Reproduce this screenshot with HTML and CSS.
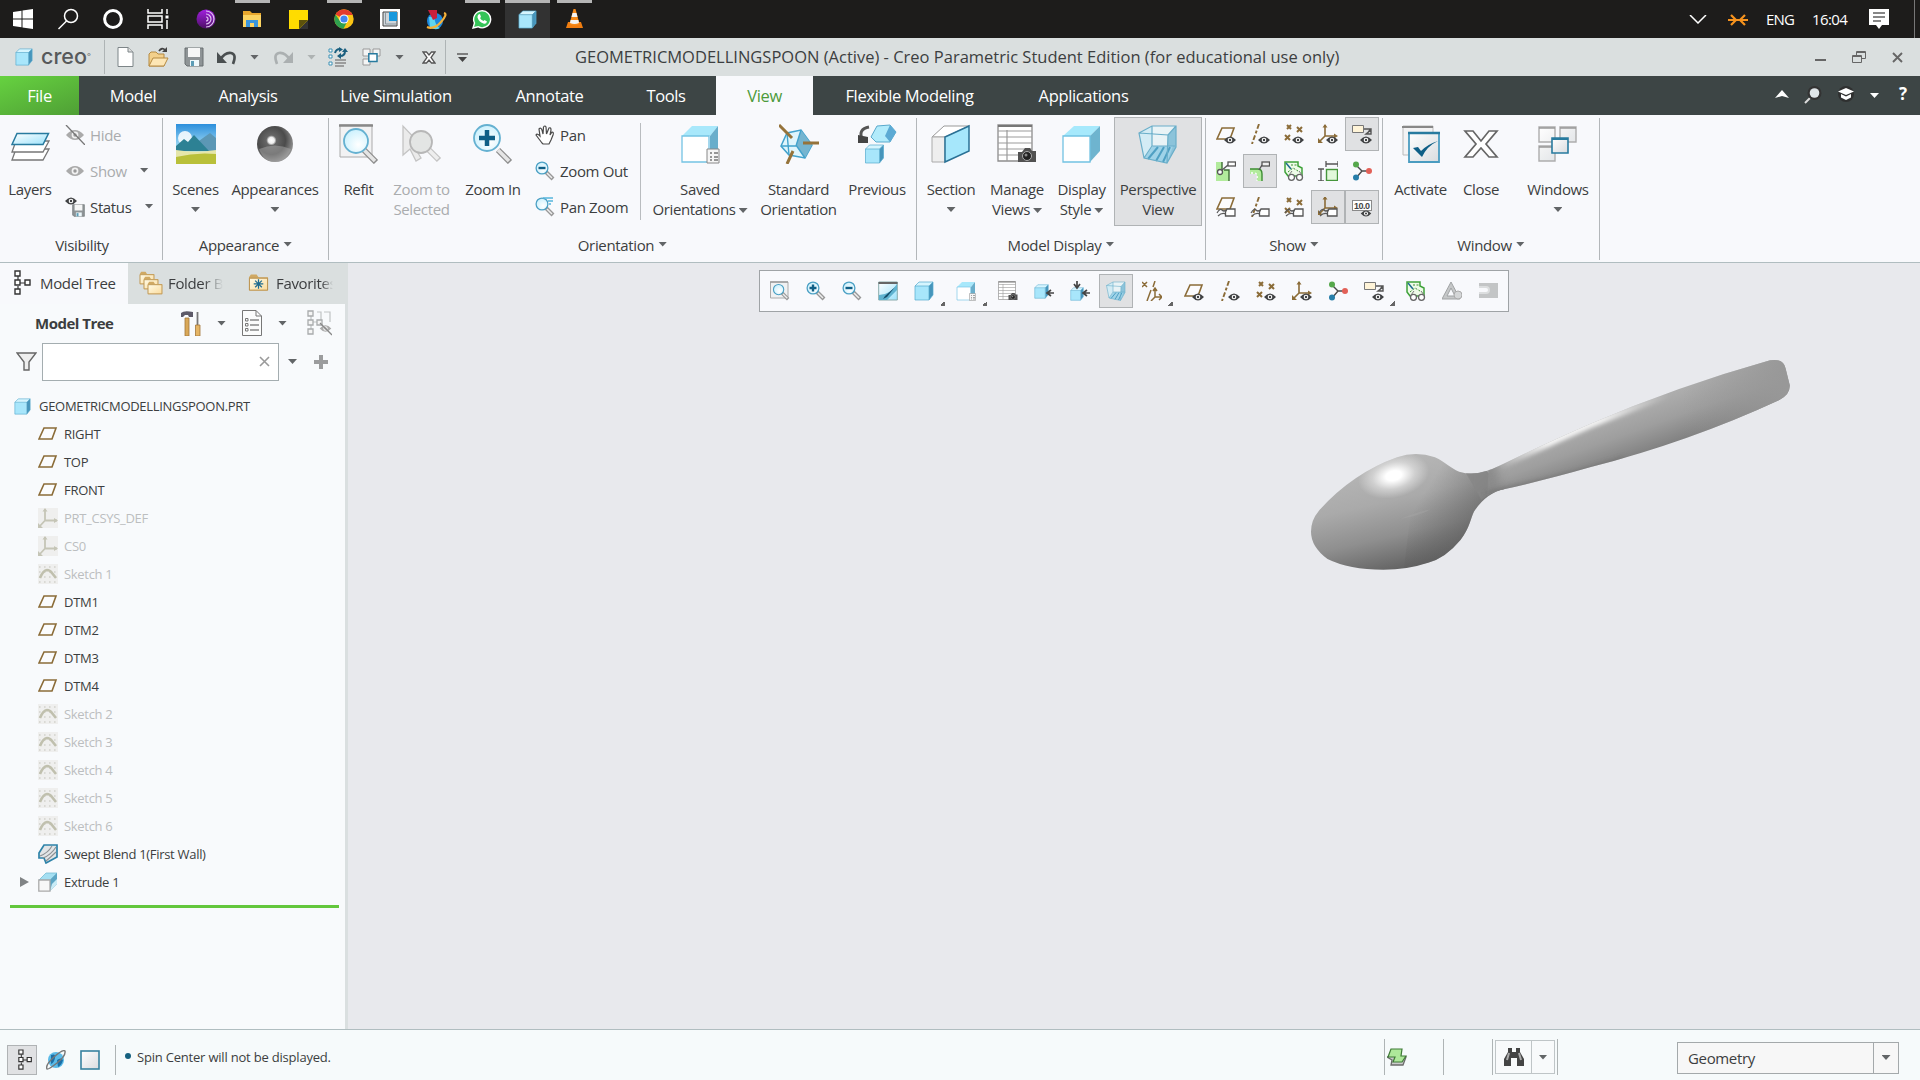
FILE: index.html
```html
<!DOCTYPE html>
<html lang="en">
<head>
<meta charset="utf-8">
<title>GEOMETRICMODELLINGSPOON - Creo Parametric</title>
<link rel="stylesheet" href="styles.css">
</head>
<body>
<svg class="defs" width="0" height="0" aria-hidden="true">
  <defs>
    <linearGradient id="g-sheet" x1="0" y1="0" x2="1" y2="1"><stop offset="0" stop-color="#fff"/><stop offset="1" stop-color="#d9dcdf"/></linearGradient>
    <linearGradient id="g-ice" x1="0" y1="0" x2="1" y2="1"><stop offset="0" stop-color="#fff"/><stop offset="1" stop-color="#9be2fb"/></linearGradient>
    <linearGradient id="g-sky" x1="0" y1="0" x2="0" y2="1"><stop offset="0" stop-color="#2c8fdc"/><stop offset=".6" stop-color="#a6def5"/></linearGradient>
    <radialGradient id="g-ball" cx=".4" cy=".4" r=".65"><stop offset="0" stop-color="#fff"/><stop offset=".13" stop-color="#eee"/><stop offset=".22" stop-color="#666"/><stop offset=".6" stop-color="#4b4b4b"/><stop offset="1" stop-color="#999"/></radialGradient>
    <radialGradient id="g-lens" cx=".6" cy=".65" r=".7"><stop offset="0" stop-color="#fff"/><stop offset="1" stop-color="#c9f0fd"/></radialGradient>
    <linearGradient id="g-folder" x1="0" y1="0" x2="1" y2="1"><stop offset="0" stop-color="#fffbe8"/><stop offset="1" stop-color="#fadb9c"/></linearGradient>
    <linearGradient id="g-tor" x1="0" y1="0" x2="0" y2="1"><stop offset="0" stop-color="#a21fe0"/><stop offset="1" stop-color="#4d0f66"/></linearGradient>
  </defs>

  <symbol id="plane" viewBox="0 0 20 20"><path d="M6 4H18L14 15H1Z" fill="#fff" fill-opacity=".4" stroke="#8b6c38" stroke-width="1.600"/></symbol>
  <symbol id="eye" viewBox="0 0 12 8"><path d="M0 4Q6-3 12 4Q6 11 0 4Z" fill="#404244"/><circle cx="6" cy="4" r="2.300" fill="#fff"/><circle cx="6" cy="4" r="1.200" fill="#404244"/></symbol>
  <symbol id="tag" viewBox="0 0 20 10"><path d="M1 6Q4 1 6 3T10 3M2 9Q6 5 10 7" fill="none" stroke="#5a5a5a" stroke-width="1.200"/><path d="M11 2H19V9H9.500V5Z" fill="#fff" stroke="#555" stroke-width="1.300"/></symbol>
  <symbol id="axisline" viewBox="0 0 20 20"><path d="M9 0L2 20" stroke="#8b6c38" stroke-width="1.900" stroke-dasharray="5 2 3 2"/></symbol>
  <symbol id="points" viewBox="0 0 20 20"><path d="M3 1L7 5M7 1L3 5M13 3L18 8M18 3L13 8M1 11L6 16M6 11L1 16" stroke="#8b6c38" stroke-width="2"/></symbol>
  <symbol id="csys" viewBox="0 0 20 20"><path d="M7 1V12H18M7 12L1 18" fill="none" stroke="#8b6c38" stroke-width="1.600"/><path d="M4.500 3.500L7 0L9.500 3.500ZM16 9.500L20 12L16 14.500ZM0 14V19H5Z" fill="#8b6c38"/></symbol>

  <symbol id="plane-eye" viewBox="0 0 20 20"><use href="#plane" width="20" height="20"/><use href="#eye" x="8" y="12" width="12" height="8"/></symbol>
  <symbol id="axis-eye" viewBox="0 0 20 20"><use href="#axisline" width="20" height="20"/><use href="#eye" x="8" y="12" width="12" height="8"/></symbol>
  <symbol id="points-eye" viewBox="0 0 20 20"><use href="#points" width="20" height="20"/><use href="#eye" x="8" y="12" width="12" height="8"/></symbol>
  <symbol id="csys-eye" viewBox="0 0 20 20"><use href="#csys" width="20" height="20"/><use href="#eye" x="8" y="12" width="12" height="8"/></symbol>
  <symbol id="plane-tag" viewBox="0 0 20 20"><use href="#plane" y="-3" width="20" height="20"/><use href="#tag" y="10" width="20" height="10"/></symbol>
  <symbol id="axis-tag" viewBox="0 0 20 20"><use href="#axisline" width="20" height="20"/><use href="#tag" y="10" width="20" height="10"/></symbol>
  <symbol id="points-tag" viewBox="0 0 20 20"><use href="#points" width="20" height="20"/><use href="#tag" y="10" width="20" height="10"/></symbol>
  <symbol id="csys-tag" viewBox="0 0 20 20"><use href="#csys" y="-1" width="20" height="20"/><use href="#tag" y="10" width="20" height="10"/></symbol>
  <symbol id="note-eye" viewBox="0 0 20 20"><path d="M.5 1.500H11.500V8.500H.5Z" fill="#fff4d8" stroke="#777"/><path d="M12 5H18.500L15 10M19 6V10H14Z" fill="none" stroke="#555" stroke-width="1.400"/><use href="#eye" x="8" y="12" width="12" height="8"/></symbol>
  <symbol id="surf-a" viewBox="0 0 20 20"><path d="M0 1H6V9H13V20H0Z" fill="#b2eb9c"/><path d="M6 1V8M8 9H13V20" fill="none" stroke="#3e6d34" stroke-width="1.400"/><path d="M5 10L12 4" stroke="#555" stroke-width="1.400"/><circle cx="4" cy="11" r="2.500" fill="#fff" stroke="#555" stroke-width="1.300"/><rect x="12" y="1" width="7.500" height="4" fill="#fff" stroke="#555" stroke-width="1.300"/></symbol>
  <symbol id="surf-b" viewBox="0 0 20 20"><path d="M0 8H8Q12 8 12 13V20H7V13H0Z" fill="#b2eb9c"/><path d="M0 8H8Q12 8 12 13V20" fill="none" stroke="#3c8d32" stroke-width="1.400"/><path d="M1 12H5Q8 13 7 20" fill="none" stroke="#fff" stroke-width="1.300" stroke-dasharray="2 2"/><path d="M9 9L12 4" stroke="#555" stroke-width="1.400"/><rect x="12" y="1" width="7.500" height="4" fill="#eee" stroke="#555" stroke-width="1.300"/></symbol>
  <symbol id="glasses" viewBox="0 0 20 20"><path d="M1 1H14V5L18 7V15H4L1 11Z" fill="#eefbe8" stroke="#3fa23a" stroke-width="1.500"/><path d="M2 2L7 8" stroke="#1d6b8e" stroke-width="1.500"/><path d="M7 4H13M4 11L9 7L14 10" fill="none" stroke="#3c8d32" stroke-dasharray="2 1.500"/><circle cx="7.500" cy="16.300" r="3" fill="#fff" stroke="#666" stroke-width="1.300"/><circle cx="15.500" cy="16.300" r="3" fill="#fff" stroke="#666" stroke-width="1.300"/><path d="M5 14L8 10M18 14L15 10" stroke="#777"/></symbol>
  <symbol id="dims" viewBox="0 0 20 20"><rect x="8.500" y="8.500" width="11" height="11" fill="#e2f8da" stroke="#46963b" stroke-width="1.400"/><path d="M8 3H20M8 0V6M20 0V6M3 8V20M0 8H6M0 20H6" stroke="#555" stroke-width="1.300"/></symbol>
  <symbol id="spin" viewBox="0 0 20 20"><path d="M4 4L10 10L18 10M10 10L4 17" fill="none" stroke="#4a4a4a" stroke-width="1.400"/><circle cx="4" cy="3.500" r="3" fill="#56a84c"/><circle cx="17" cy="10" r="3" fill="#e26057"/><circle cx="4" cy="16.500" r="3" fill="#277ea9"/></symbol>
  <symbol id="cube" viewBox="0 0 20 20"><path d="M1 5L5 1H19L15 5Z" fill="#d6f5fe"/><path d="M15 5L19 1V14L15 19Z" fill="#4795bb"/><path d="M1 5H15V19H1Z" fill="#a8e6fb"/><path d="M1 5L5 1H19V14L15 19H1ZM1 5H15V19M15 5L19 1" fill="none" stroke="#54a9cd" stroke-width=".7"/></symbol>
  <symbol id="mag" viewBox="0 0 20 20"><path d="M11 11L18 18" stroke="#989898" stroke-width="4"/><path d="M12 12L17 17" stroke="#eee" stroke-width="1.500"/><circle cx="7" cy="7" r="5.900" fill="url(#g-lens)" stroke="#4ba0c4" stroke-width="1.300"/></symbol>
  <symbol id="zoom-in" viewBox="0 0 20 20"><use href="#mag" width="20" height="20"/><path d="M7 3.500V10.500M3.500 7H10.500" stroke="#0f5f86" stroke-width="2.400"/></symbol>
  <symbol id="zoom-out" viewBox="0 0 20 20"><use href="#mag" width="20" height="20"/><path d="M3.500 7H10.500" stroke="#0f5f86" stroke-width="2.400"/></symbol>
  <symbol id="pan-zoom" viewBox="0 0 20 20"><use href="#mag" width="20" height="20"/><path d="M8 1H18M13 4H18M14 7H16" stroke="#55b5dc" stroke-width="1.300"/></symbol>
  <symbol id="refit" viewBox="0 0 20 20"><path d="M.5 1H18V17H.5Z" fill="#f0f1f2" stroke="#aaa"/><path d="M0 1H18" stroke="#999" stroke-width="1.400"/><g transform="translate(2.500 2.500) scale(.87)"><use href="#mag" width="20" height="20"/></g></symbol>
  <symbol id="camera" viewBox="0 0 20 16"><path d="M1 5H5L8 1H13L15 4H19V15H1Z" fill="#515151"/><circle cx="10" cy="9" r="4.500" fill="#222" stroke="#aaa"/><circle cx="9" cy="8" r="1.500" fill="#888"/></symbol>
  <symbol id="table-cam" viewBox="0 0 40 40"><path d="M1 1H35V37H1Z" fill="#fff" stroke="#8d8d8d" stroke-width="1.300"/><path d="M1 2H35" stroke="#777" stroke-width="2"/><path d="M10 6V37M1 7H35M1 13H35M1 19H35M1 25H35M1 31H35" stroke="#9b9b9b" stroke-width="1.200"/><use href="#camera" x="20" y="22" width="20" height="18"/></symbol>
  <symbol id="persp" viewBox="0 0 40 40"><path d="M1 9L14 2H38V23L29 39L6 34Z" fill="#d3ecf5"/><path d="M14 2H38V22H14Z" fill="#e9f3f6"/><path d="M30 11L38 2V23L29 39Z" fill="#8cc3da"/><path d="M6 34L15 22H35L29 39Z" fill="#9fd3e8"/><path d="M10 35L20 23M18 37L26 23M25 38L32 23" stroke="#4fa0c3" stroke-width="2"/><path d="M1 9L14 2H38V23L29 39L6 34ZM1 9L30 11L29 39M30 11L38 2M14 2V22H37M14 22L6 34" fill="none" stroke="#6aaec9" stroke-width="1.200"/></symbol>
  <symbol id="saved" viewBox="0 0 40 40"><path d="M2 12L12 2H38L30 12Z" fill="#a8e8fb"/><path d="M30 12L38 2V30L30 37Z" fill="#69aecb"/><path d="M2 12H29V38H2Z" fill="#fff" stroke="#74c3e4" stroke-width="1.300"/><path d="M27 25H39V39H27Z" fill="#f5f5f5" stroke="#888"/><path d="M30 29H32M34 29H38M30 33H32M34 33H38M30 36H32M34 36H38" stroke="#777" stroke-width="1.300"/></symbol>
  <symbol id="dispstyle" viewBox="0 0 40 40"><path d="M1 12L12 2H38L28 12Z" fill="#a6e9fc"/><path d="M28 12L38 2V27L28 38Z" fill="#6eb4cf"/><path d="M1 12H28V38H1Z" fill="#fff" stroke="#72c2e2" stroke-width="1.300"/></symbol>
  <symbol id="wins" viewBox="0 0 40 40"><path d="M1 3H17V18H1ZM22 3H38V18H22ZM1 22H17V37H1Z" fill="url(#g-sheet)" stroke="#adadad" stroke-width="1.400"/><path d="M1 4H17M22 4H38M1 23H17" stroke="#999" stroke-width="1.600"/><path d="M14 14H30V29H14Z" fill="url(#g-sheet)" stroke="#287b9f" stroke-width="1.600"/><path d="M14 15H30" stroke="#287b9f" stroke-width="2"/></symbol>
  <symbol id="tree" viewBox="0 0 18 26"><path d="M4 6V10M4 16V20M6 13H11" stroke="#333" stroke-width="1.200"/><path d="M1 1H6V6H1ZM1 10H6V15H1ZM1 19H6V24H1ZM11 10H16V15H11Z" fill="#fff" stroke="#333" stroke-width="1.400"/></symbol>
  <symbol id="folder" viewBox="0 0 22 19"><path d="M1 4L3 1H9L11 4H21V18H1Z" fill="#d0a963"/><path d="M1.500 5H20.500V17.500H1.500Z" fill="url(#g-folder)" stroke="#b98f4b"/></symbol>
  <symbol id="sketch" viewBox="0 0 20 20"><rect width="20" height="20" fill="#efefee"/><path d="M1 3H20M1 8H20M1 13H20M1 18H20" stroke="#d2d2cc" stroke-width="1.600" stroke-dasharray="1.600 3.400"/><path d="M2 14Q5 6.500 9 6Q12 6 14 9L18 14" fill="none" stroke="#c0c0ae" stroke-width="2.600"/></symbol>
  <symbol id="csys-off" viewBox="0 0 20 20"><rect width="20" height="20" fill="#efefee"/><path d="M7 1V12.500H19M7 12.500L1 19" fill="none" stroke="#c5c5b6" stroke-width="1.800"/><path d="M4.500 3.500H9.500L7 0ZM16 10V15L20 12.500ZM0 15V20H5Z" fill="#c5c5b6"/></symbol>
  <symbol id="eye-g" viewBox="0 0 20 14"><path d="M1 7Q10-3 19 7Q10 17 1 7Z" fill="#aaa"/><circle cx="10" cy="7" r="3.400" fill="#f1f1f1"/><circle cx="10" cy="7" r="1.700" fill="#999"/></symbol>
  <symbol id="floppy" viewBox="0 0 20 20"><path d="M1 1H19V19H3L1 17Z" fill="#8e9496" stroke="#696f71"/><path d="M4 1H16V10H4Z" fill="#f5f6f6"/><path d="M6 13H15V19H6Z" fill="#eef8fb"/><path d="M7 14H10V19H7Z" fill="#5c9db6"/></symbol>
</svg>

<header class="taskbar">
  <div class="sys">
    <span><svg width="20" height="20" viewBox="0 0 20 20" fill="#fff"><path d="M0 3L8.500 1.800V9.500H0ZM9.500 1.600L20 0V9.500H9.500ZM0 10.500H8.500V18.200L0 17ZM9.500 10.500H20V20L9.500 18.400Z"/></svg></span>
    <span><svg width="22" height="22" viewBox="0 0 22 22" fill="none" stroke="#fff" stroke-width="1.500"><circle cx="14" cy="8" r="6.500"/><path d="M9.500 13L1.500 21"/></svg></span>
    <span><svg width="20" height="20" viewBox="0 0 20 20" fill="none" stroke="#fff" stroke-width="3"><circle cx="10" cy="10" r="8.400"/></svg></span>
    <span><svg width="22" height="20" viewBox="0 0 22 20" fill="none" stroke="#fff" stroke-width="1.500"><path d="M1 0V4H15V0M1 20V16H15V20M1 7H15V13H1ZM20 0V5M20 11V20"/><path d="M18.500 8H21.500" stroke-width="3"/></svg></span>
  </div>
  <nav class="apps">
    <span><svg width="20" height="20" viewBox="0 0 20 20"><circle cx="10" cy="10" r="9.500" fill="url(#g-tor)"/><path d="M10 2A8 8 0 0 1 10 18M10 5A5 5 0 0 1 10 15M10 8A2 2 0 0 1 10 12" fill="none" stroke="#e0c5f2" stroke-width="1.200"/></svg></span>
    <span class="run"><svg width="20" height="18" viewBox="0 0 20 18"><path d="M1 1H8L10 3H19V17H1Z" fill="#e8a72d"/><path d="M1 5H19V17H1Z" fill="#fcd462"/><path d="M4 10H16V17H12V13H8V17H4Z" fill="#3a95dc"/></svg></span>
    <span><svg width="19" height="19" viewBox="0 0 19 19"><path d="M0 0H19V11L11 19H0Z" fill="#ffdc00"/><path d="M19 10V19H10Z" fill="#333"/><path d="M10 10H19L10 19Z" fill="#5d520b"/></svg></span>
    <span class="run"><svg width="20" height="20" viewBox="0 0 20 20"><circle cx="10" cy="10" r="9.700" fill="#fbc414"/><path d="M10 10L1.500 5.500A9.700 9.700 0 0 1 18.800 6H10Z" fill="#e33b2e"/><path d="M1.500 5.500A9.700 9.700 0 0 0 9.500 19.700L13.500 12L6 12Z" fill="#2fa14f"/><circle cx="10" cy="10" r="4.600" fill="#fff"/><circle cx="10" cy="10" r="3.600" fill="#4285f0"/></svg></span>
    <span><svg width="20" height="20" viewBox="0 0 20 20"><path d="M0 0H20V20H0Z" fill="#fff"/><path d="M3 3H17V17H3Z" fill="#d0d6da" stroke="#444"/><path d="M9 3H17V12H9Z" fill="#1898dd"/><path d="M5.500 4V15H16" fill="none" stroke="#8b969e" stroke-width="1"/></svg></span>
    <span><svg width="21" height="21" viewBox="0 0 21 21"><circle cx="9" cy="12" r="8" fill="#1b88df"/><path d="M3 8Q8 7 9 12T14 19Q9 22 4 18Z" fill="#5fd5ef"/><path d="M1 18Q8 21 15 13T18 4" fill="none" stroke="#f5b13a" stroke-width="2.200"/><path d="M2 1L11 1V9L7 11Z" fill="#c91f3c"/></svg></span>
    <span class="run"><svg width="20" height="20" viewBox="0 0 20 20"><path d="M1 19L2.500 14A8.500 8.500 0 1 1 6 17.700Z" fill="#35c458" stroke="#fff" stroke-width="1.400"/><path d="M6.500 5.500L8 5L9 8L8 9Q9 11 11.500 12L12.500 11L15 12.500Q14.500 15 12 14.700Q7 13.500 5.500 8.500Q5.400 6.500 6.500 5.500Z" fill="#fff"/></svg></span>
    <span class="run current"><svg width="19" height="19"><use href="#cube"/></svg></span>
    <span class="run"><svg width="17" height="20" viewBox="0 0 17 20"><path d="M2 13H15L17 19H0Z" fill="#f07d10"/><path d="M7.500 0H9.500L13.500 15Q8.500 18 3.500 15Z" fill="#f58a1a"/><path d="M6.500 4H10.500L11.500 8H5.500ZM4.600 11H12.400L13 14Q8.500 16 4 14Z" fill="#f3f3f3"/></svg></span>
  </nav>
  <div class="tray">
    <svg class="t-chev" width="18" height="9" viewBox="0 0 18 9" fill="none" stroke="#fff" stroke-width="1.500"><path d="M1 0L9 8L17 0"/></svg>
    <svg class="t-mid" width="20" height="13" viewBox="0 0 20 13" fill="none" stroke="#f7931e" stroke-width="2.200"><path d="M0 7H20M3 2L8 7L3 12M17 2L12 7L17 12"/></svg>
    <span class="lang">ENG</span><span class="clock">16:04</span>
    <svg width="20" height="20" viewBox="0 0 20 20"><path d="M0 0H20V16H13L10 20L7 16H0Z" fill="#fff"/><path d="M4 4H16M4 8H16M4 12H12" stroke="#111" stroke-width="1.200"/></svg>
    <i class="peek"></i>
  </div>
</header>

<div class="titlebar">
  <div class="brand"><svg width="18" height="18"><use href="#cube"/></svg><b>creo</b><small>°</small></div>
  <div class="quick">
    <svg width="17" height="20" viewBox="0 0 17 20"><path d="M1 .5H11L16 5V19.500H1Z" fill="#fff" stroke="#7d8588"/><path d="M11 .5V5H16" fill="#ddd" stroke="#7d8588"/></svg>
    <svg width="21" height="20" viewBox="0 0 21 20"><path d="M1 7L3 5H8L10 7H16V19H1Z" fill="#f3d08b" stroke="#b58a42"/><path d="M5 11H20L16 19H1Z" fill="#fde6b5" stroke="#b58a42"/><path d="M11 4Q14 0 17 3" fill="none" stroke="#444" stroke-width="1.800"/><path d="M14 5H19V0Z" fill="#444"/></svg>
    <svg width="20" height="20"><use href="#floppy"/></svg>
    <svg width="20" height="15" viewBox="0 0 20 15"><path d="M3 10Q8 2 14 3T16 14" fill="none" stroke="#4a4f50" stroke-width="2.600"/><path d="M0 2V13H10Z" fill="#4a4f50"/></svg>
    <i class="arr"></i>
    <svg width="20" height="15" viewBox="0 0 20 15"><path d="M17 10Q12 2 6 3T4 14" fill="none" stroke="#abb0b1" stroke-width="2.600"/><path d="M20 2V13H10Z" fill="#abb0b1"/></svg>
    <i class="arr off"></i>
    <svg width="20" height="20" viewBox="0 0 20 20"><path d="M1 2H4V5H1ZM1 8H4V11H1ZM1 15H4V18H1Z" fill="#fff" stroke="#3c91b5"/><path d="M7 13H18M7 16H18M7 19H16" stroke="#888" stroke-width="1.300"/><path d="M7 6Q8 2 12 2M17 4Q17 9 12 9" fill="none" stroke="#1b5f7f" stroke-width="2"/><path d="M11 0L15 2.500L11 5ZM13 6L9 9L13 12ZM14 5H20L17 1Z" fill="#1b5f7f"/></svg>
    <svg width="20" height="20" viewBox="0 0 20 20"><path d="M1 2H8V9H1ZM11 2H18V9H11ZM1 12H8V18H1Z" fill="#f4f5f5" stroke="#999"/><path d="M6.800 6.800H15V14.500H6.800Z" fill="#fff" stroke="#287b9f" stroke-width="1.500"/></svg>
    <i class="arr"></i>
    <svg width="14" height="13" viewBox="0 0 14 13"><path d="M1 1H4.500L7 4L9.500 1H13L9 6.500L13 12H9.500L7 9L4.500 12H1L5 6.500Z" fill="#fff" stroke="#555" stroke-width="1.300"/></svg>
    <span class="custom"><svg width="11" height="9" viewBox="0 0 11 9"><path d="M0 1H11" stroke="#555" stroke-width="1.400"/><path d="M1 4H10L5.500 9Z" fill="#444"/></svg></span>
  </div>
  <h1>GEOMETRICMODELLINGSPOON (Active) - Creo Parametric Student Edition (for educational use only)</h1>
  <div class="winbtns">
    <svg width="11" height="13" viewBox="0 0 11 13"><path d="M0 9H11" stroke="#666" stroke-width="2"/></svg>
    <svg width="14" height="12" viewBox="0 0 14 12" fill="none" stroke="#666"><path d="M4.500 4V.5H13.500V7.500H10M4 1.500H13"/><path d="M.5 4.500H9.500V11.500H.5ZM0 5.500H10"/></svg>
    <svg width="11" height="11" viewBox="0 0 11 11" stroke="#666" stroke-width="1.900"><path d="M1 1L10 10M10 1L1 10"/></svg>
  </div>
</div>

<nav class="tabs">
  <a class="file">File</a><a>Model</a><a>Analysis</a><a>Live Simulation</a><a>Annotate</a><a>Tools</a><a class="on">View</a><a>Flexible Modeling</a><a>Applications</a>
  <div class="tabtools">
    <svg width="14" height="8" viewBox="0 0 14 8"><path d="M0 8L7 0L14 8L7 6Z" fill="#fff"/></svg>
    <svg width="18" height="19" viewBox="0 0 18 19"><path d="M1 18L6 13" stroke="#ddd" stroke-width="2"/><circle cx="10.500" cy="8" r="7" fill="#333"/><circle cx="10.500" cy="8" r="4.800" fill="#dfe5e8"/></svg>
    <svg width="18" height="16" viewBox="0 0 18 16"><circle cx="9" cy="8" r="8" fill="#2f3030"/><path d="M9 2L17 5.500L9 9L1 5.500Z" fill="#fff"/><path d="M4 8L9 10.500L14 8V11.500L9 14L4 11.500Z" fill="#fff"/></svg>
    <i class="arr white"></i>
    <b class="help">?</b>
  </div>
</nav>

<section class="ribbon">
  <div class="group g-vis">
    <div class="tools">
      <div class="big layers"><svg width="40" height="40" viewBox="0 0 40 40"><path d="M6 25H39L33 36H2Z" fill="#fff" stroke="#777" stroke-width="1.300"/><path d="M6 17H39L33 28H2Z" fill="#fff" stroke="#777" stroke-width="1.300"/><path d="M7 9.500H38.500L33 20.500H2Z" fill="url(#g-ice)" stroke="#287b9f" stroke-width="1.500"/></svg><p>Layers</p></div>
      <div class="smalls">
        <div class="off"><svg width="20" height="20" viewBox="0 0 20 20"><use href="#eye-g" y="3" width="20" height="14"/><path d="M1 0L20 20" stroke="#777" stroke-width="1.300"/></svg>Hide</div>
        <div class="off"><svg width="20" height="14"><use href="#eye-g"/></svg>Show<i class="arr far"></i></div>
        <div><svg width="20" height="20" viewBox="0 0 20 20"><use href="#floppy" x="7" y="7" width="13" height="13"/><use href="#eye" x="0" y="0" width="12" height="8"/></svg>Status<i class="arr far"></i></div>
      </div>
    </div>
    <h2>Visibility</h2>
  </div>

  <div class="group g-app">
    <div class="tools">
      <div class="big"><svg width="40" height="40" viewBox="0 0 40 40"><path d="M0 0H40V40H0Z" fill="url(#g-sky)"/><circle cx="9" cy="14" r="7" fill="#fff" opacity=".85"/><path d="M20 19L34 9L40 14V27H16Z" fill="#5c97b5"/><path d="M0 22L8 15L12 18L18 11L33 27H0Z" fill="#2d8194"/><path d="M0 26Q20 29 40 26V40H0Z" fill="#e5e6aa"/><path d="M0 33Q20 28 40 30V40H0Z" fill="#b9c03a"/></svg><p>Scenes<br><i class="arr"></i></p></div>
      <div class="big"><svg width="40" height="40" viewBox="0 0 40 40"><circle cx="20" cy="20" r="18" fill="url(#g-ball)"/><path d="M4 25Q20 18 36 25Q31 38 20 38T4 25Z" fill="#aaa" opacity=".5"/></svg><p>Appearances<br><i class="arr"></i></p></div>
    </div>
    <h2>Appearance<i class="arr"></i></h2>
  </div>

  <div class="group g-ori">
    <div class="tools">
      <div class="big"><svg width="40" height="40" viewBox="0 0 40 40"><path d="M1 1H33V33H1Z" fill="#f2f2f3" stroke="#aaa"/><path d="M0 1.500H34" stroke="#888" stroke-width="2.500"/><path d="M25 26L37 38" stroke="#8d8d8d" stroke-width="6"/><path d="M25 26L36 37" stroke="#e5e5e5" stroke-width="3.500"/><circle cx="17" cy="17" r="12" fill="url(#g-lens)" stroke="#65b1d1" stroke-width="1.800"/></svg><p>Refit</p></div>
      <div class="big off"><svg width="40" height="40" viewBox="0 0 40 40"><path d="M1 2V31L8 25L14 37L19 34L13 24H22Z" fill="#ebebeb" stroke="#c4c4c4" stroke-width="1.300"/><path d="M27 26L37 36" stroke="#c4c4c4" stroke-width="6"/><path d="M27 26L36 35" stroke="#eee" stroke-width="3.500"/><circle cx="19" cy="18" r="11" fill="#e3e5e4" stroke="#b7b7b7" stroke-width="1.800"/></svg><p>Zoom to<br>Selected</p></div>
      <div class="big"><svg width="40" height="40" viewBox="0 0 40 40"><path d="M25 26L37 38" stroke="#8d8d8d" stroke-width="6"/><path d="M25 26L36 37" stroke="#e5e5e5" stroke-width="3.500"/><circle cx="14" cy="14" r="13" fill="url(#g-lens)" stroke="#65b1d1" stroke-width="1.800"/><path d="M14 6V22M6 14H22" stroke="#0f5f86" stroke-width="4.500"/></svg><p>Zoom In</p></div>
      <div class="smalls">
        <div><svg width="20" height="20" viewBox="0 0 20 20"><path d="M7 18Q4 14 1 10Q2 8 5 11L4 4Q6 2 7 5L8 9L8.500 2Q10 0 11 2L11.500 9L14 3Q16 2 16 5L15 10L17 7Q19 7 18 10L16 15L14 19H8Z" fill="#fff" stroke="#4a4a4a" stroke-width="1.200"/></svg>Pan</div>
        <div><svg width="20" height="20"><use href="#zoom-out"/></svg>Zoom Out</div>
        <div><svg width="20" height="20"><use href="#pan-zoom"/></svg>Pan Zoom</div>
      </div>
      <i class="vsep"></i>
      <div class="big"><svg width="40" height="40"><use href="#saved"/></svg><p>Saved<br>Orientations<i class="arr in"></i></p></div>
      <div class="big"><svg width="40" height="40" viewBox="0 0 40 40"><path d="M2 22L8 9L22 6L33 21L26 34L10 31Z" fill="#dff5fc" stroke="#42a2cc" stroke-width="1.500"/><path d="M22 6L33 21L26 34L17 21Z" fill="#75b5d0"/><path d="M2 22H17L22 6M17 21L26 34M8 9L10 31" fill="none" stroke="#42a2cc" stroke-width="1.400"/><path d="M0 1L13 14M24 19H40M14 27L8 40" stroke="#95733a" stroke-width="3"/></svg><p>Standard<br>Orientation</p></div>
      <div class="big"><svg width="40" height="40" viewBox="0 0 40 40"><path d="M12 3Q1 5 5 15" fill="none" stroke="#555" stroke-width="3"/><path d="M1 11L1 19H11V13Z" fill="#444"/><path d="M14 13L20 2L33 1L39 8L33 18H19Z" fill="#b2ebfb" stroke="#5aa9cc"/><path d="M33 1L39 8L33 18L28 12Z" fill="#5caad4"/><use href="#cube" x="7" y="20" width="21" height="20"/></svg><p>Previous</p></div>
    </div>
    <h2>Orientation<i class="arr"></i></h2>
  </div>

  <div class="group g-disp">
    <div class="tools">
      <div class="big"><svg width="40" height="40" viewBox="0 0 40 40"><path d="M1 13L13 2H38L14 13Z" fill="#fff" stroke="#999"/><path d="M1 13H14V38H1Z" fill="#eee" stroke="#aaa"/><path d="M14 13L38 2V27L14 38Z" fill="#a6e7fb" stroke="#2a7195" stroke-width="1.500"/></svg><p>Section<br><i class="arr"></i></p></div>
      <div class="big"><svg width="40" height="40"><use href="#table-cam"/></svg><p>Manage<br>Views<i class="arr in"></i></p></div>
      <div class="big"><svg width="40" height="40"><use href="#dispstyle"/></svg><p>Display<br>Style<i class="arr in"></i></p></div>
      <div class="big pressed"><svg width="40" height="40"><use href="#persp"/></svg><p>Perspective<br>View</p></div>
    </div>
    <h2>Model Display<i class="arr"></i></h2>
  </div>

  <div class="group g-show">
    <div class="iconsgrid">
      <span><svg><use href="#plane-eye"/></svg></span><span><svg><use href="#axis-eye"/></svg></span><span><svg><use href="#points-eye"/></svg></span><span><svg><use href="#csys-eye"/></svg></span><span class="pressed"><svg><use href="#note-eye"/></svg></span>
      <span><svg><use href="#surf-a"/></svg></span><span class="pressed"><svg><use href="#surf-b"/></svg></span><span><svg><use href="#glasses"/></svg></span><span><svg><use href="#dims"/></svg></span><span><svg><use href="#spin"/></svg></span>
      <span><svg><use href="#plane-tag"/></svg></span><span><svg><use href="#axis-tag"/></svg></span><span><svg><use href="#points-tag"/></svg></span><span class="pressed"><svg><use href="#csys-tag"/></svg></span><span class="pressed"><svg viewBox="0 0 20 20"><rect x=".5" y="3.500" width="19" height="10" fill="#fff" stroke="#8a8a8a"/><text x="2" y="12" font-family="Liberation Sans, sans-serif" font-weight="700" font-size="9" letter-spacing="0" fill="#444" textLength="16">10.0</text><use href="#eye" x="8" y="13" width="12" height="7"/></svg></span>
    </div>
    <h2>Show<i class="arr"></i></h2>
  </div>

  <div class="group g-win">
    <div class="tools">
      <div class="big"><svg width="40" height="40" viewBox="0 0 40 40"><path d="M2 2H32V31H2Z" fill="#f3f3f4" stroke="#bbb"/><path d="M1 3H32" stroke="#888" stroke-width="2"/><path d="M8 9H38V38H8Z" fill="url(#g-sheet)" stroke="#4a9cc0" stroke-width="1.800"/><path d="M7 9H39" stroke="#287b9f" stroke-width="2.500"/><path d="M12 24L21 33Q26 22 37 17Q27 20 20 27L17 23Z" fill="#0f5f86"/></svg><p>Activate</p></div>
      <div class="big"><svg width="40" height="40" viewBox="0 0 40 40"><path d="M4 7H12L20 17L28 7H36L25 20L36 33H28L20 24L12 33H4L15 20Z" fill="#fff" stroke="#666" stroke-width="1.700"/></svg><p>Close</p></div>
      <i class="vsep"></i>
      <div class="big"><svg width="40" height="40"><use href="#wins"/></svg><p>Windows<br><i class="arr"></i></p></div>
    </div>
    <h2>Window<i class="arr"></i></h2>
  </div>
</section>

<main>
  <aside>
    <div class="sidetabs">
      <div class="on"><svg width="18" height="26"><use href="#tree"/></svg><span>Model Tree</span></div>
      <div class="t-folder"><svg width="24" height="24" viewBox="0 0 24 24"><use href="#folder" width="16" height="14"/><use href="#folder" x="4" y="5" width="16" height="14"/><use href="#folder" x="8" y="10" width="16" height="14"/></svg><span class="fade">Folder Br</span></div>
      <div class="t-fav"><svg width="21" height="19" viewBox="0 0 22 19"><use href="#folder" width="22" height="19"/><path d="M11 6V16M6 11H16M7.500 7.500L14.500 14.500M14.500 7.500L7.500 14.500" stroke="#1f6c90" stroke-width="1.300"/></svg><span class="fade">Favorites</span></div>
    </div>
    <div class="treehead">
      <b>Model Tree</b>
      <svg width="21" height="25" viewBox="0 0 21 25"><path d="M1 2Q4-1 13 1V6H9L8 4H5L3 6H1Z" fill="#5d5a68"/><path d="M5 7H9V25H5Z" fill="#d9a858" stroke="#a2763a" stroke-width=".8"/><path d="M17.500 1V14" stroke="#777" stroke-width="1.800"/><path d="M15.500 14H20V25H15.500Z" fill="#e5b565" stroke="#a2763a" stroke-width=".8"/></svg>
      <i class="arr"></i>
      <svg width="20" height="26" viewBox="0 0 20 26"><path d="M.5 .5H14L19.500 6V25.500H.5Z" fill="#fbfcfc" stroke="#777"/><path d="M14 .5V6H19.500" fill="none" stroke="#777"/><path d="M8 10H17M8 15H17M8 20H17" stroke="#888" stroke-width="1.400"/><path d="M3.500 8.500H6V11H3.500ZM3.500 13.500H6V16H3.500ZM3.500 18.500H6V21H3.500Z" fill="none" stroke="#777"/></svg>
      <i class="arr"></i>
      <svg width="25" height="26" viewBox="0 0 25 26"><path d="M4 6V20M6 12H10M10 2H14V12M17 2H23V12" fill="none" stroke="#c0c3c4" stroke-width="1.200"/><path d="M1 1H6V6H1ZM1 10H6V15H1ZM1 19H6V24H1ZM10 10H15V15H10Z" fill="#f5f5f5" stroke="#a8abac" stroke-width="1.300"/><use href="#eye-g" x="12" y="14" width="13" height="9"/><path d="M13 13L25 25" stroke="#888" stroke-width="1.300"/></svg>
    </div>
    <div class="filter">
      <svg width="21" height="19" viewBox="0 0 21 19"><path d="M1 1H20L13 10V18H8V10Z" fill="#eee" stroke="#666" stroke-width="1.400"/></svg>
      <div class="field"><svg width="11" height="11" viewBox="0 0 11 11" stroke="#9a9a9a" stroke-width="1.600"><path d="M1 1L10 10M10 1L1 10"/></svg></div>
      <i class="arr"></i>
      <svg width="14" height="14" viewBox="0 0 14 14" stroke="#9b9c9d" stroke-width="4"><path d="M7 0V14M0 7H14"/></svg>
    </div>
    <ul class="tree">
      <li class="root"><svg width="17" height="16"><use href="#cube"/></svg>GEOMETRICMODELLINGSPOON.PRT</li>
      <li><svg><use href="#plane"/></svg>RIGHT</li>
      <li><svg><use href="#plane"/></svg>TOP</li>
      <li><svg><use href="#plane"/></svg>FRONT</li>
      <li class="off"><svg><use href="#csys-off"/></svg>PRT_CSYS_DEF</li>
      <li class="off"><svg><use href="#csys-off"/></svg>CS0</li>
      <li class="off"><svg><use href="#sketch"/></svg>Sketch 1</li>
      <li><svg><use href="#plane"/></svg>DTM1</li>
      <li><svg><use href="#plane"/></svg>DTM2</li>
      <li><svg><use href="#plane"/></svg>DTM3</li>
      <li><svg><use href="#plane"/></svg>DTM4</li>
      <li class="off"><svg><use href="#sketch"/></svg>Sketch 2</li>
      <li class="off"><svg><use href="#sketch"/></svg>Sketch 3</li>
      <li class="off"><svg><use href="#sketch"/></svg>Sketch 4</li>
      <li class="off"><svg><use href="#sketch"/></svg>Sketch 5</li>
      <li class="off"><svg><use href="#sketch"/></svg>Sketch 6</li>
      <li><svg viewBox="0 0 20 20"><path d="M1 9L6 1H19V13L8 19L6 14L1 14Z" fill="#e2e5e7" stroke="#2e83a9" stroke-width="1.700"/><path d="M2 12Q10 9 14 2M5 14Q13 11 18 3M8 17Q14 12 18 8" fill="none" stroke="#8d9194" stroke-width="1.100"/></svg>Swept Blend 1(First Wall)</li>
      <li class="exp"><i></i><svg viewBox="0 0 20 20"><path d="M1 8L8 1H19L12 8Z" fill="#a4dff2" stroke="#76bcd6" stroke-width=".8"/><path d="M12 8L19 1V12L12 19Z" fill="#5da5c4"/><path d="M14 12L19 7V12L12 19Z" fill="#c9ebf6"/><path d="M.8 8H12V19.200H.8Z" fill="#f7f7f7" stroke="#aaa" stroke-width="1.300"/></svg>Extrude 1</li>
    </ul>
    <hr>
  </aside>

  <div class="canvas">
    <div class="gtools">
      <span><svg><use href="#refit"/></svg></span><span><svg><use href="#zoom-in"/></svg></span><span><svg><use href="#zoom-out"/></svg></span>
      <span><svg viewBox="0 0 20 20"><path d="M.7 1H19.300V19H.7Z" fill="url(#g-ice)" stroke="#8aa"/><path d="M.5 2H19.500" stroke="#666" stroke-width="2"/><path d="M1 19H9L19 9V3Q12 14 1 14Z" fill="#5fb3d0"/><path d="M17 6L7 15L5 18L9 16Z" fill="#154f6d"/></svg></span>
      <span class="more"><svg><use href="#cube"/></svg></span><span class="more"><svg><use href="#saved"/></svg></span><span><svg><use href="#table-cam"/></svg></span>
      <span><svg viewBox="0 0 20 20"><use href="#cube" y="3" width="15" height="15"/><path d="M20 12H14M17 9L13 12L17 15" fill="none" stroke="#444" stroke-width="1.700"/></svg></span>
      <span><svg viewBox="0 0 20 20"><use href="#cube" y="6" width="14" height="14"/><path d="M20 12H14M17 9L13 12L17 15M7 0V6M4 3L7 7L10 3" fill="none" stroke="#444" stroke-width="1.700"/></svg></span>
      <span class="pressed"><svg><use href="#persp"/></svg></span>
      <span class="more"><svg viewBox="0 0 20 20"><path d="M0 1L5 6M5 1L0 6M13 0L11 6M9 9L5 20M13 8V16H20M13 16L9 20M11 10L13 7L15 10M17 13L20 16L17 19" fill="none" stroke="#8b6c38" stroke-width="1.500"/></svg></span>
      <span><svg><use href="#plane-eye"/></svg></span><span><svg><use href="#axis-eye"/></svg></span><span><svg><use href="#points-eye"/></svg></span><span><svg><use href="#csys-eye"/></svg></span><span><svg><use href="#spin"/></svg></span><span class="more"><svg><use href="#note-eye"/></svg></span><span><svg><use href="#glasses"/></svg></span>
      <span><svg viewBox="0 0 20 20"><path d="M9 1L18 18H0ZM9 7L5 15H13Z" fill="#c5c7c8" fill-rule="evenodd" stroke="#a0a3a4"/><circle cx="16" cy="14" r="4" fill="#d4d6d7" stroke="#aaa"/></svg></span>
      <span><svg viewBox="0 0 20 20"><path d="M1 2H20V17H1V12H8Q11 12 11 9T8 6H1Z" fill="#c3c5c6"/><path d="M1 6H8Q11 6 11 9T8 12H1" fill="none" stroke="#dcdedf" stroke-width="2"/></svg></span>
    </div>
    <svg class="spoon" width="540" height="250" viewBox="0 0 1568 750" preserveAspectRatio="none">
      <defs>
        <linearGradient id="s-bowl" gradientUnits="userSpaceOnUse" x1="270" y1="350" x2="350" y2="690"><stop offset="0" stop-color="#b8b8b8"/><stop offset=".4" stop-color="#aaa"/><stop offset=".7" stop-color="#8f8f8f"/><stop offset="1" stop-color="#626262"/></linearGradient>
        <linearGradient id="s-dark" gradientUnits="userSpaceOnUse" x1="400" y1="490" x2="550" y2="580"><stop offset="0" stop-color="#5c5c5c" stop-opacity="0"/><stop offset="1" stop-color="#5c5c5c" stop-opacity=".6"/></linearGradient>
        <radialGradient id="s-shine" gradientUnits="userSpaceOnUse" cx="0" cy="0" r="1" gradientTransform="translate(330 407) rotate(-14) scale(105 66)"><stop offset="0" stop-color="#fff"/><stop offset=".22" stop-color="#fff"/><stop offset=".6" stop-color="#fff" stop-opacity=".4"/><stop offset="1" stop-color="#fff" stop-opacity="0"/></radialGradient>
        <linearGradient id="s-handle" gradientUnits="userSpaceOnUse" x1="1000" y1="210" x2="1048" y2="340"><stop offset="0" stop-color="#adadad"/><stop offset=".5" stop-color="#9e9e9e"/><stop offset="1" stop-color="#828282"/></linearGradient>
        <linearGradient id="s-tip" x1="0" y1="0" x2="1" y2="0"><stop offset="0" stop-color="#989898" stop-opacity="0"/><stop offset=".45" stop-color="#989898" stop-opacity="0"/><stop offset=".95" stop-color="#989898"/></linearGradient>
        <linearGradient id="s-edge" x1="0" y1="0" x2="1" y2="0"><stop offset="0" stop-color="#fff" stop-opacity="0"/><stop offset=".3" stop-color="#fff" stop-opacity=".95"/><stop offset=".6" stop-color="#fff" stop-opacity=".9"/><stop offset="1" stop-color="#fff" stop-opacity="0"/></linearGradient>
        <filter id="s-blur" x="-10%" y="-30%" width="120%" height="160%"><feGaussianBlur stdDeviation="7"/></filter>
        <filter id="s-soft" x="-30%" y="-30%" width="160%" height="160%"><feGaussianBlur stdDeviation="14"/></filter>
        <clipPath id="s-clip"><path d="M540 400Q585 405 640 376Q750 320 900 252Q1150 140 1423 61Q1462 54 1468 85L1480 135Q1482 163 1450 180Q1190 305 900 382Q790 415 650 448Q610 455 585 480Z"/></clipPath>
      </defs>
      <path d="M90 575Q90 540 113 512Q210 400 340 352Q395 332 450 352C480 366 495 385 520 395Q560 407 600 393L650 448Q600 458 563 515C552 540 552 560 524 600Q480 655 430 668Q370 689 300 689Q200 689 138 657Q90 620 90 575Z" fill="url(#s-bowl)"/>
      <path d="M400 342Q435 342 460 356C485 370 495 385 520 395Q560 407 600 393L650 448Q600 458 563 515C552 540 552 560 524 600Q480 655 430 668L360 684Z" fill="url(#s-dark)"/>
      <path d="M90 575Q90 540 113 512Q210 400 340 352Q395 332 450 352L480 500L200 600Z" fill="url(#s-shine)"/>
      <path d="M350 537Q410 526 438 508Q390 518 350 537Z" fill="#adadad" opacity=".3"/>
      <g clip-path="url(#s-clip)">
        <path d="M610 300L1500 0V200L600 500Z" fill="url(#s-handle)"/>
        <path d="M900 0H1500V400H900Z" fill="url(#s-tip)"/>
        <path d="M630 382Q750 322 900 254L1130 162" fill="none" stroke="url(#s-edge)" stroke-width="20" filter="url(#s-blur)"/>
        <path d="M530 370H625L650 470L540 500Z" fill="#868686" opacity=".8" filter="url(#s-soft)"/>
        <path d="M600 462Q640 449 700 437Q850 405 1000 355" fill="none" stroke="#6f6f6f" stroke-width="12" filter="url(#s-blur)" opacity=".7"/>
      </g>
    </svg>
  </div>
</main>

<footer>
  <span class="pressed fbtn"><svg width="15" height="22"><use href="#tree"/></svg></span>
  <svg width="20" height="20" viewBox="0 0 20 20"><circle cx="10" cy="10" r="8" fill="#5bbbe8"/><path d="M5 5Q10 3 9 8T5 14ZM11 10Q15 7 17 10Q16 15 12 17Z" fill="#1b70a8"/><path d="M1 19Q-1 15 8 7T19 1Q20 6 11 13T1 19Z" fill="none" stroke="#777" stroke-width="1.400"/></svg>
  <svg class="sq" width="20" height="20" viewBox="0 0 20 20"><rect x="1" y="1" width="18" height="18" fill="url(#g-sheet)" stroke="#37829f" stroke-width="1.600"/></svg>
  <p class="msg">Spin Center will not be displayed.</p>
  <div class="fright">
    <div class="regen"><svg width="20" height="19" viewBox="0 0 20 19"><path d="M2 9H0L5 12L4 17H16L19 9H16" fill="#ccc" stroke="#6b6b6b" stroke-width="1.300"/><path d="M4 1H15L14 8H19L15 14H6L8 9H1Z" fill="#aee89a" stroke="#3f7a37" stroke-width="1.200"/></svg></div>
    <div class="findwrap"><div class="find"><span><svg width="20" height="20" viewBox="0 0 20 20"><path d="M4 1H8V5H12V1H16V5L20 12V19H13V11H7V19H0V12L4 5Z" fill="#444"/><path d="M5 6L3 13M15 6L17 13" stroke="#aaa" stroke-width="2"/></svg></span><span><i class="arr"></i></span></div></div>
    <div class="select"><span>Geometry</span><em><i class="arr"></i></em></div>
  </div>
</footer>
</body>
</html>
```
FILE: styles.css
```css
* { box-sizing: border-box; }
body {
  margin: 0;
  width: 1920px;
  height: 1080px;
  overflow: hidden;
  display: flex;
  flex-direction: column;
  background: #f8f9fc;
  color: #3c3e40;
  font: 15px/20px "Open Sans", "Noto Sans", sans-serif;
  letter-spacing: -0.35px;
  white-space: nowrap;
}
.defs { position: absolute; }
svg { display: block; flex: none; }
p, h1, h2, ul { margin: 0; padding: 0; font-weight: 400; }

.arr {
  display: inline-block;
  flex: none;
  width: 9px;
  height: 5px;
  background: #626567;
  clip-path: polygon(0 0, 100% 0, 50% 100%);
}
.arr.off { background: #aeb3b3; }
.arr.white { background: #fff; }
.off { color: #aaacae; }
.pressed { background: #e0e1e3; border: 1px solid #b0b3b5; }

/* Taskbar */
.taskbar { height: 38px; background: #1d1c1b; display: flex; color: #fff; }
.sys, .apps, .tray { display: flex; }
.sys span { width: 45px; display: grid; place-items: center; }
.apps { margin-left: 3px; }
.apps span { width: 46px; display: grid; place-items: center; border-top: 3px solid transparent; padding-bottom: 3px; }
.apps .run { background: linear-gradient(#b5b5b5, #b5b5b5) center 0 / 35px 3px no-repeat border-box; }
.apps .current { background: #323232; border-color: #b5b5b5; width: 45px; margin-right: 1px; }
.tray { margin-left: auto; align-items: center; }
.t-mid { margin: 0 18px 0 21px; }
.tray .lang { width: 46px; font-size: 15px; letter-spacing: -0.8px; }
.tray .clock { width: 57px; font-size: 15px; letter-spacing: -0.6px; }
.peek { width: 1px; height: 38px; background: #777; margin: 0 5px 0 25px; }

/* Title bar */
.titlebar { height: 38px; background: #dadfdf; display: flex; align-items: center; }
.brand { width: 105px; height: 34px; padding-left: 15px; display: flex; align-items: center; border-right: 1px solid #aeb4b5; color: #56595b; }
.brand b { margin-left: 8px; font: 500 21.5px/20px "Inter", sans-serif; letter-spacing: 0; padding-bottom: 3px; }
.brand small { font-size: 9px; line-height: 20px; }
.quick { display: flex; align-items: center; padding-left: 12px; }
.quick svg:nth-child(2) { margin-left: 14px; }
.quick svg:nth-child(3) { margin-left: 15px; }
.quick svg:nth-child(4) { margin: 0 13px 0 13px; }
.quick svg:nth-child(6) { margin: 0 14px; }
.quick svg:nth-child(8) { margin: 0 14px 0 12px; }
.quick svg:nth-child(9) { margin-right: 13px; }
.quick svg:nth-child(11) { margin-left: 18px; }
.custom { border-left: 1px solid #aeb4b5; height: 34px; margin-left: 9px; padding-left: 11px; display: flex; align-items: center; }
.titlebar h1 { flex: 1; font-size: 16.5px; padding-left: 107px; letter-spacing: 0; }
.winbtns { display: flex; gap: 26px; align-items: center; padding-right: 17px; }

/* Tabs */
.tabs {
  height: 39px;
  background: #3d4545;
  color: #fff;
  display: grid;
  grid-template-columns: 79px 108px 122px 174px 133px 100px 97px 193px 155px 1fr;
  grid-template-rows: 39px;
  font-size: 16.5px;
  line-height: 40px;
  text-align: center;
}
.tabs .file { background: linear-gradient(160deg, #66d240, #4f9f35); }
.tabs .on { background: #f8f9fc; color: #4c9b3a; }
.tabtools { display: flex; align-items: center; justify-content: flex-end; padding: 0 11px 3px 0; }
.tabtools svg { margin-right: 15px; }
.tabtools .arr { margin: 3px 18px 0 0; }
.help { font: 700 17px/20px "Open Sans", sans-serif; width: 12px; }

/* Ribbon */
.ribbon { height: 148px; border-bottom: 1px solid #b0bdc0; display: flex; }
.group { border-right: 1px solid #b3b7ba; margin: 3px 0 2px; display: flex; flex-direction: column; flex: none; }
.group h2 { font-size: 15px; height: 20px; line-height: 20px; display: flex; justify-content: center; align-items: center; }
.group h2 .arr { margin: -2px 0 0 4px; }
.tools { height: 117px; display: flex; }
.big { display: flex; flex-direction: column; align-items: center; padding-top: 6px; text-align: center; flex: none; }
.big p { margin-top: 15px; }
.big .arr { vertical-align: 3px; }
.big .arr.in { margin-left: 3px; vertical-align: 2px; }
.big.pressed { height: 109px; margin-top: -1px; }
.smalls { margin-top: -1px; }
.smalls div { height: 36px; display: flex; align-items: center; gap: 5px; }
.smalls .far { margin: -2px 0 0 8px; }
.vsep { width: 1px; height: 97px; margin-top: 5px; background: #b9bcbf; }

.g-vis { width: 163px; }
.g-vis .big { width: 60px; }
.g-vis .smalls { margin-left: 5px; }
.g-vis h2 { padding-left: 2px; }
.g-app { width: 166px; }
.g-app .big:nth-child(1) { width: 65px; }
.g-app .big:nth-child(2) { width: 94px; }
.g-ori { width: 588px; }
.g-ori .big:nth-child(1) { width: 59px; }
.g-ori .big:nth-child(2) { width: 67px; }
.g-ori .big:nth-child(3) { width: 76px; }
.g-ori .smalls { width: 106px; margin-left: 4px; }
.g-ori .vsep + .big { width: 118px; }
.g-ori .big:nth-child(7) { width: 79px; }
.g-ori .big:nth-child(8) { width: 78px; }
.g-disp { width: 289px; }
.g-disp .big:nth-child(1) { width: 68px; }
.g-disp .big:nth-child(2) { width: 64px; }
.g-disp .big:nth-child(3) { width: 65px; }
.g-disp .big:nth-child(4) { width: 88px; }
.g-show { width: 177px; }
.g-win { width: 217px; }
.g-win .big:nth-child(1) { width: 75px; }
.g-win .big:nth-child(2) { width: 46px; }
.g-win .vsep { margin-left: 10px; }
.g-win .big:nth-child(4) { width: 88px; }
.iconsgrid { height: 117px; padding-left: 3px; display: grid; grid-template-columns: repeat(5, 34px); grid-auto-rows: 34px; row-gap: 2.5px; margin-top: -1px; margin-bottom: 1px; }
.iconsgrid span { display: grid; place-items: center; }
.iconsgrid svg, .tree svg, .gtools svg { width: 20px; height: 20px; }

/* Model tree panel */
main { flex: 1; display: flex; min-height: 0; }
aside { width: 348px; border-right: 3px solid #dadfe0; background: #f8fafc; }
.sidetabs { height: 41px; width: 348px; background: #dadfdf; display: flex; }
.sidetabs div { display: flex; align-items: center; padding-bottom: 2px; }
.sidetabs .on { width: 128px; padding-left: 14px; background: #f8f9fc; }
.sidetabs .on span { margin-left: 8px; }
.t-folder { width: 109px; padding-left: 11px; }
.t-fav { padding-left: 11px; }
.fade { margin-left: 5px; width: 55px; overflow: hidden; -webkit-mask-image: linear-gradient(90deg, #000 65%, transparent); mask-image: linear-gradient(90deg, #000 65%, transparent); }
.t-fav .fade { margin-left: 7px; width: 57px; -webkit-mask-image: linear-gradient(90deg, #000 80%, transparent); mask-image: linear-gradient(90deg, #000 80%, transparent); }
.treehead { height: 38px; padding-left: 35px; display: flex; align-items: center; }
.treehead b { width: 145px; letter-spacing: -0.5px; }
.treehead .arr:nth-of-type(1) { margin: 0 16px 0 16px; }
.treehead .arr:nth-of-type(2) { margin: 0 20px 0 16px; }
.filter { height: 39px; padding-left: 16px; display: flex; align-items: center; }
.field { width: 237px; height: 38px; margin: 0 9px 0 5px; border: 1px solid #a4adb0; background: #fff; display: flex; align-items: center; justify-content: flex-end; padding-right: 8px; }
.filter .arr { margin-right: 17px; }
.tree { list-style: none; padding-top: 11px; font-size: 13px; letter-spacing: -0.3px; color: #3c3e40; }
.tree li { height: 28px; display: flex; align-items: center; gap: 6px; padding-left: 38px; }
.tree .root { padding-left: 14px; gap: 8px; }
.tree .root svg { width: 17px; height: 17px; }
.tree .off { color: #bcbec0; }
.tree .exp { padding-left: 20px; gap: 6px; }
.tree .exp i { width: 9px; height: 10px; margin-right: -3px; background: #808385; clip-path: polygon(0 0, 100% 50%, 0 100%); }
.tree .exp svg { margin-left: 6px; }
aside hr { margin: 9px 6px 0 10px; height: 3px; border: 0; background: #63c73c; }

/* Graphics area */
.canvas { flex: 1; background: #e8e9ed; position: relative; }
.gtools { position: absolute; left: 411px; top: 7px; width: 750px; height: 42px; border: 1px solid #9fa3a6; background: #f8f9fc; display: flex; align-items: center; padding-left: 2px; }
.gtools span { width: 36px; height: 34px; padding: 7px 8px; flex: none; }
.gtools .more { width: 42px; background: linear-gradient(135deg, transparent 50%, #666 50%) 34px 27px / 5px 5px no-repeat; }
.gtools .pressed { width: 34px; height: 34px; padding: 6px; margin: 0 1px; }
.spoon { position: absolute; left: 932px; top: 77px; }

/* Status bar */
footer { height: 51px; border-top: 1px solid #b0bdc0; background: #f6fafb; display: flex; align-items: center; padding: 10px 0 0 7px; }
.fbtn { width: 30px; height: 30px; display: grid; place-items: center; margin-right: 9px; }
.fbtn svg { margin-left: 6px; }
.sq { margin-left: 14px; }
.msg { height: 30px; margin-left: 15px; border-left: 1px solid #aeb4b5; padding-left: 21px; font-size: 13px; line-height: 24px; letter-spacing: -0.2px; position: relative; }
.msg::before { content: ""; position: absolute; left: 9px; top: 8px; width: 6px; height: 6px; border-radius: 50%; background: #15607f; }
.fright { margin-left: auto; display: flex; align-items: center; margin-top: -6px; padding-right: 21px; }
.regen { width: 60px; height: 36px; border: solid #aeb4b5; border-width: 0 1px; display: flex; align-items: center; padding-left: 2px; }
.findwrap { margin: 0 119px 0 48px; height: 36px; padding: 1px 2px; border: solid #aeb4b5; border-width: 0 1px; }
.find { display: flex; height: 34px; border: 1px solid #bfc5c7; background: #f8fafb; }
.find span { width: 35px; display: grid; place-items: center; }
.find span + span { width: 23px; border-left: 1px solid #bfc5c7; }
.select { width: 222px; height: 32px; border: 1px solid #a4a9ab; background: #f7f7f7; display: flex; align-items: center; margin-top: 1px; }
.select span { flex: 1; padding-left: 10px; }
.select em { width: 25px; height: 30px; border-left: 1px solid #a4a9ab; display: grid; place-items: center; }
```
